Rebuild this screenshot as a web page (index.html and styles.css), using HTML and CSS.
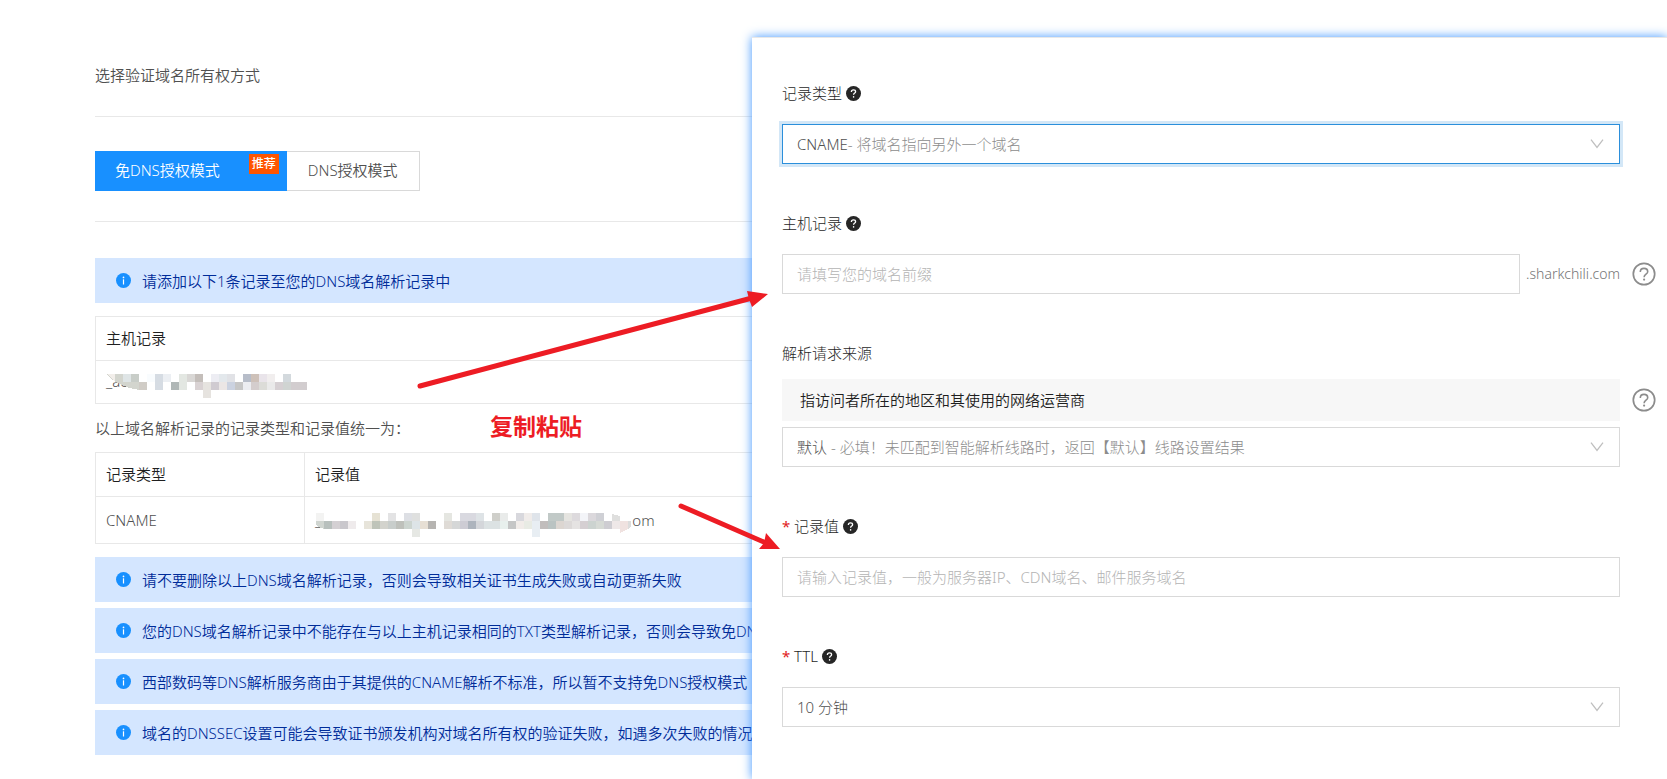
FILE: index.html
```html
<!DOCTYPE html>
<html lang="zh-CN">
<head>
<meta charset="utf-8">
<title>域名验证</title>
<link rel="stylesheet" href="styles.css">
</head>
<body>
<svg class="sprite" aria-hidden="true">
  <symbol id="info" viewBox="0 0 15 15"><circle cx="7.5" cy="7.5" r="7.5" fill="#1890ff"/><rect x="6.9" y="6.3" width="1.2" height="5.2" fill="#fff"/><circle cx="7.5" cy="4.4" r=".85" fill="#fff"/></symbol>
  <symbol id="ask" viewBox="0 0 15 15"><circle cx="7.5" cy="7.5" r="7.5" fill="#262626"/><path d="M5.4 6V5.8C5.4 4.6 6.3 3.9 7.5 3.9S9.6 4.7 9.6 5.7C9.6 7.1 7.6 7.1 7.6 8.8" fill="none" stroke="#fff" stroke-width="1.3"/><circle cx="7.6" cy="10.9" r=".8" fill="#fff"/></symbol>
  <symbol id="help" viewBox="0 0 24 24"><g fill="none" stroke="#8c8c8c"><circle cx="12" cy="12" r="10.7" stroke-width="1.7"/><path d="M8.3 9.9C8.3 7.7 9.8 6.4 12 6.4S15.7 7.8 15.7 9.7C15.7 12.2 12.1 12.3 12.1 15.2" stroke-width="1.6"/></g><circle cx="12.1" cy="17.6" r="1.1" fill="#8c8c8c"/></symbol>
  <symbol id="down" viewBox="0 0 14 10"><path d="M1 .7 7 8.5 13 .7" fill="none" stroke="#bfbfbf" stroke-width="1.3"/></symbol>
</svg>

<main class="page">
  <h1 class="title">选择验证域名所有权方式</h1>
  <div class="tabs">
    <button class="tab tab-active" type="button">免DNS授权模式<span class="badge">推荐</span></button>
    <button class="tab" type="button">DNS授权模式</button>
  </div>

  <p class="notice"><svg class="dot"><use href="#info"/></svg>请添加以下1条记录至您的DNS域名解析记录中</p>

  <table class="records host">
    <thead><tr><th>主机记录</th></tr></thead>
    <tbody><tr><td><div class="masked">_ac<svg class="mosaic mosaic-host" viewBox="0 0 200 24" shape-rendering="crispEdges">
      <path d="M0 1V0H32V16Q12 13 0 1Z" fill="#d3d5ce"/>
      <path d="M0 0h8v8z" fill="#f2eeea"/><path d="M16 0h8v8h-8z" fill="#dfe5e6"/><path d="M24 0h8v8h-8z" fill="#c8cdc8"/><path d="M40 0h8v8h-8z" fill="#f9fcfe"/><path d="M48 0h8v16h-8z" fill="#d6dce3"/><path d="M56 0h8v8h-8z" fill="#eceff3"/><path d="M72 0h8v16h-8z" fill="#e3e7e2"/><path d="M80 0h8v8h-8z" fill="#d9d7d5"/><path d="M88 0h8v8h-8z" fill="#c4beba"/><path d="M104 0h8v8h-8z" fill="#ededf3"/><path d="M112 0h8v8h-8z" fill="#e3e8ec"/><path d="M120 0h8v8h-8z" fill="#e1e2e6"/><path d="M136 0h8v8h-8z" fill="#b7bdc9"/><path d="M144 0h8v8h-8z" fill="#cec1b9"/><path d="M152 0h8v8h-8z" fill="#e9e4ea"/><path d="M160 0h8v8h-8z" fill="#f1eeee"/><path d="M176 0h8v8h-8z" fill="#d3d9dd"/>
      <path d="M32 8h8v8h-8z" fill="#d0ccc6"/><path d="M64 8h8v8h-8z" fill="#b0b7b6"/><path d="M88 8h8v8h-8z" fill="#d9d2d3"/><path d="M96 8h8v16h-8z" fill="#e6e3df"/><path d="M104 8h8v8h-8z" fill="#d0cbd1"/><path d="M112 8h8v8h-8z" fill="#ebe6e5"/><path d="M120 8h8v8h-8z" fill="#cbd2e0"/><path d="M128 8h8v8h-8z" fill="#c6c6c6"/><path d="M136 8h8v8h-8z" fill="#ecedf1"/><path d="M144 8h8v8h-8z" fill="#d4cdcd"/><path d="M152 8h8v8h-8z" fill="#dcdcd8"/><path d="M160 8h8v8h-8z" fill="#eaeaea"/><path d="M168 8h8v8h-8z" fill="#d6d0d3"/><path d="M176 8h8v8h-8z" fill="#d0d4d2"/><path d="M184 8h16v8h-16z" fill="#d2cdcf"/>
    </svg></div></td></tr></tbody>
  </table>

  <p class="note">以上域名解析记录的记录类型和记录值统一为：</p>

  <table class="records value">
    <thead><tr><th class="type">记录类型</th><th>记录值</th></tr></thead>
    <tbody><tr><td>CNAME</td><td><div class="masked">_<svg class="mosaic mosaic-value" viewBox="0 0 316 24" shape-rendering="crispEdges">
      <path d="M0 0h8v8h-8z" fill="#f3f3f2"/><path d="M56 0h8v8h-8z" fill="#e6e2d4"/><path d="M72 0h8v8h-8z" fill="#e3e3e4"/><path d="M88 0h8v8h-8z" fill="#dddfe4"/><path d="M96 0h8v8h-8z" fill="#dfe0df"/><path d="M128 0h8v8h-8z" fill="#e5e6e1"/><path d="M144 0h16v8h-16z" fill="#d9d9e0"/><path d="M160 0h8v8h-8z" fill="#dee3e6"/><path d="M176 0h8v8h-8z" fill="#cfcfca"/><path d="M184 0h8v8h-8z" fill="#e9ebea"/><path d="M200 0h8v8h-8z" fill="#d8d8dd"/><path d="M208 0h8v8h-8z" fill="#f0ecea"/><path d="M216 0h8v8h-8z" fill="#dfe4ea"/><path d="M232 0h16v8h-16z" fill="#c1c9c7"/><path d="M248 0h8v8h-8z" fill="#e5e4e0"/><path d="M256 0h8v8h-8z" fill="#dddadd"/><path d="M264 0h8v8h-8z" fill="#f3f4f8"/><path d="M272 0h8v8h-8z" fill="#dbd8dc"/><path d="M280 0h8v8h-8z" fill="#cfd0d5"/><path d="M296 1l8 2v5h-8z" fill="#dfdfde"/>
      <path d="M0 8h8v8Q2 14 0 12Z" fill="#d0d5d0"/><path d="M8 8h8v8h-8z" fill="#b8c0bd"/><path d="M16 8h8v8h-8z" fill="#d4d0d3"/><path d="M24 8h8v8h-8z" fill="#c9c7cc"/><path d="M32 8h8v8h-8z" fill="#efebec"/><path d="M48 8h8v8h-8z" fill="#e7e4da"/><path d="M56 8h8v8h-8z" fill="#bfc4b9"/><path d="M64 8h8v8h-8z" fill="#d3d3cd"/><path d="M72 8h8v8h-8z" fill="#c8cdcb"/><path d="M80 8h8v8h-8z" fill="#bec0bb"/><path d="M88 8h8v8h-8z" fill="#ccd4cf"/><path d="M96 8h8v8h-8z" fill="#dde4e7"/><path d="M104 8h8v8h-8z" fill="#e7dfd4"/><path d="M112 8h8v8h-8z" fill="#b6b4b1"/><path d="M128 8h8v8h-8z" fill="#dfdbd6"/><path d="M136 8h8v8h-8z" fill="#d5d7d7"/><path d="M144 8h8v8h-8z" fill="#cdccd4"/><path d="M152 8h8v8h-8z" fill="#adb4bd"/><path d="M160 8h8v8h-8z" fill="#d4d6da"/><path d="M168 8h16v8h-16z" fill="#dce2e3"/><path d="M184 8h8v8h-8z" fill="#e8f0ed"/><path d="M192 8h8v8h-8z" fill="#c5c6c6"/><path d="M200 8h8v8h-8z" fill="#f1ece9"/><path d="M208 8h8v8h-8z" fill="#e8ebe4"/><path d="M216 8h8v16h-8z" fill="#e8eef3"/><path d="M224 8h8v8h-8z" fill="#c1bdbc"/><path d="M232 8h8v8h-8z" fill="#bac3c2"/><path d="M240 8h8v8h-8z" fill="#dcd6d1"/><path d="M248 8h8v8h-8z" fill="#dcd9d8"/><path d="M256 8h8v8h-8z" fill="#e5e3e2"/><path d="M264 8h8v8h-8z" fill="#d5cfd2"/><path d="M272 8h8v8h-8z" fill="#ccd3d0"/><path d="M280 8h8v8h-8z" fill="#d6dad5"/><path d="M288 8h8v8h-8z" fill="#cecdd2"/><path d="M296 8h8v8h-8z" fill="#eee8e8"/><path d="M304 8h8v8l-8 4z" fill="#f0e2e0"/><path d="M312 8h3v6l-3 2z" fill="#dcdcdc"/><path d="M96 16h8v8h-8z" fill="#e6e8e4"/>
    </svg>om</div></td></tr></tbody>
  </table>

  <div class="notices">
    <p class="notice"><svg class="dot"><use href="#info"/></svg>请不要删除以上DNS域名解析记录，否则会导致相关证书生成失败或自动更新失败</p>
    <p class="notice"><svg class="dot"><use href="#info"/></svg>您的DNS域名解析记录中不能存在与以上主机记录相同的TXT类型解析记录，否则会导致免DNS</p>
    <p class="notice"><svg class="dot"><use href="#info"/></svg>西部数码等DNS解析服务商由于其提供的CNAME解析不标准，所以暂不支持免DNS授权模式</p>
    <p class="notice"><svg class="dot"><use href="#info"/></svg>域名的DNSSEC设置可能会导致证书颁发机构对域名所有权的验证失败，如遇多次失败的情况</p>
  </div>
</main>

<form class="panel">
  <div class="field">
    <label class="label" for="type">记录类型<svg class="ask"><use href="#ask"/></svg></label>
    <div class="box box-focus"><select class="pick" id="type"><option>CNAME</option></select><span class="hint">- 将域名指向另外一个域名</span><svg class="down"><use href="#down"/></svg></div>
  </div>
  <div class="field">
    <label class="label" for="host">主机记录<svg class="ask"><use href="#ask"/></svg></label>
    <div class="suffixed"><input class="box text" id="host" type="text" placeholder="请填写您的域名前缀"><span class="suffix">.sharkchili.com</span></div>
    <svg class="help"><use href="#help"/></svg>
  </div>
  <div class="field field-tight">
    <label class="label" for="source">解析请求来源</label>
    <p class="tip">指访问者所在的地区和其使用的网络运营商</p>
    <svg class="help"><use href="#help"/></svg>
    <div class="box box-after"><select class="pick" id="source"><option>默认</option></select><span class="hint"> - 必填！未匹配到智能解析线路时，返回【默认】线路设置结果</span><svg class="down"><use href="#down"/></svg></div>
  </div>
  <div class="field">
    <label class="label" for="value"><span class="star">*</span>记录值<svg class="ask"><use href="#ask"/></svg></label>
    <input class="box text" id="value" type="text" placeholder="请输入记录值，一般为服务器IP、CDN域名、邮件服务域名">
  </div>
  <div class="field">
    <label class="label" for="ttl"><span class="star">*</span>TTL<svg class="ask"><use href="#ask"/></svg></label>
    <div class="box"><select class="pick" id="ttl"><option>10 分钟</option></select><svg class="down"><use href="#down"/></svg></div>
  </div>
</form>

<svg class="arrows" viewBox="0 0 370 280" aria-hidden="true">
  <g stroke="#ed1c24" stroke-width="5" stroke-linecap="round"><path d="M4 106 336 18"/><path d="M265 226 350 263"/></g>
  <path d="M331 11 352 14 336 27 333 19ZM350 253 364 269 343 269 348 263Z" fill="#ed1c24"/>
</svg>
<p class="caption">复制粘贴</p>
</body>
</html>
```

FILE: styles.css
```css
* { box-sizing: border-box; }
body {
  position: relative;
  margin: 0;
  min-height: 100vh;
  overflow: hidden;
  background: #fff;
  color: #505050;
  font: 350 15px/24px "Noto Sans", "Noto Sans CJK SC", sans-serif;
}
p, h1 { margin: 0; font: inherit; }
button, input, select { margin: 0; font: inherit; color: inherit; }
.sprite { position: absolute; width: 0; height: 0; }

.page { padding: 63px 0 24px 95px; }
.title { padding-bottom: 29px; border-bottom: 1px solid #e8e8e8; }
.tabs {
  display: flex;
  padding: 34px 0 30px;
  margin-bottom: 36px;
  border-bottom: 1px solid #e8e8e8;
}
.tab {
  position: relative;
  height: 40px;
  padding: 0 21px 2px;
  border: 1px solid #d9d9d9;
  border-left: 0;
  background: #fff;
}
.tab-active {
  padding: 0 67px 2px 20px;
  border: 0;
  background: #1890ff;
  color: #fff;
}
.badge {
  position: absolute;
  top: 3px;
  right: 8px;
  padding: 0 3px;
  background: #ff5500;
  font-size: 12px;
  font-weight: 500;
  line-height: 20px;
}
.notice {
  display: flex;
  align-items: center;
  gap: 11px;
  height: 45px;
  padding-left: 21px;
  background: #d4e6ff;
  color: #002c99;
  white-space: nowrap;
}
.dot { flex: none; width: 15px; height: 15px; }
.notices { display: grid; gap: 6px; }

.records {
  width: 100%;
  border-collapse: collapse;
  table-layout: fixed;
}
.records th, .records td {
  height: 44px;
  padding: 0 10px 2px;
  border: 1px solid #e8e8e8;
  text-align: left;
}
.records th { color: #1f1f1f; font-weight: inherit; }
.records .type { width: 209px; }
.records.host td { height: 43px; }
.host { margin: 13px 0 12px; }
.value { margin-bottom: 13px; }
.records.value td { height: 47px; padding-bottom: 0; }
.masked { display: flex; align-items: center; }
.mosaic { flex: none; height: 24px; margin-top: 10px; }
.mosaic-host { width: 200px; margin-left: -20px; }
.mosaic-value { width: 316px; margin-left: -5px; }
.note { padding-bottom: 12px; }

.panel {
  position: absolute;
  top: 37px;
  right: 0;
  bottom: 0;
  left: 752px;
  display: flex;
  flex-direction: column;
  gap: 47px;
  padding: 43px 11px 0 30px;
  border-top: 1px solid #e8e8e8;
  background: #fff;
  box-shadow: 0 0 10px #4096ff;
  font-weight: 300;
}
.field {
  display: grid;
  grid-template-columns: 1fr 24px;
  column-gap: 12px;
  row-gap: 19px;
  align-items: center;
}
.field-tight { row-gap: 14px; }
.label {
  grid-column: 1 / -1;
  display: flex;
  align-items: center;
  gap: 4px;
  color: #1f1f1f;
}
.ask { width: 15px; height: 15px; }
.star { width: 8px; color: #e02020; font-weight: 400; }
.box {
  display: flex;
  align-items: center;
  width: 100%;
  height: 40px;
  padding: 0 15px 0 14px;
  border: 1px solid #d9d9d9;
  background: #fff;
}
.box-focus { border-color: #2b8fdb; box-shadow: 0 0 0 3px #d3e7f7; }
.box-after { margin-top: -8px; }
.pick {
  appearance: none;
  field-sizing: content;
  padding: 0;
  border: 0;
  background: none;
}
.hint { color: #8c8c8c; white-space: pre; }
.down { width: 14px; height: 10px; margin-left: auto; }
.text::placeholder { color: #b4b4b4; opacity: 1; }
.suffixed { display: flex; align-items: center; gap: 6px; }
.suffixed .text { flex: 1; min-width: 0; }
.suffix { color: #757575; font-size: 14px; font-weight: 350; }
.help { width: 24px; height: 24px; }
.tip {
  padding: 9px 18px;
  background: #f7f7f7;
  color: #1f1f1f;
  font-weight: 350;
}

.arrows {
  position: absolute;
  top: 280px;
  left: 416px;
  width: 370px;
  height: 280px;
  pointer-events: none;
}
.caption {
  position: absolute;
  top: 410px;
  left: 490px;
  color: #ed1c24;
  font-size: 23px;
  font-weight: 700;
  line-height: 32px;
}
```
